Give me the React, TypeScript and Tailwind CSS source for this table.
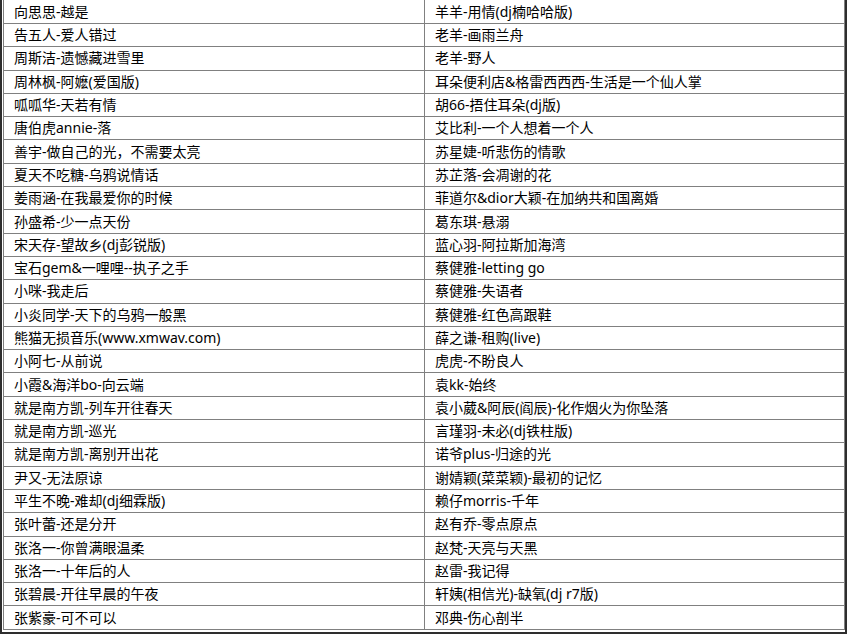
import React from "react";

const left = [
  "向思思-越是",
  "告五人-爱人错过",
  "周斯洁-遗憾藏进雪里",
  "周林枫-阿嬷(爱国版)",
  "呱呱华-天若有情",
  "唐伯虎annie-落",
  "善宇-做自己的光，不需要太亮",
  "夏天不吃糖-乌鸦说情话",
  "姜雨涵-在我最爱你的时候",
  "孙盛希-少一点天份",
  "宋天存-望故乡(dj彭锐版)",
  "宝石gem&一哩哩--执子之手",
  "小咪-我走后",
  "小炎同学-天下的乌鸦一般黑",
  "熊猫无损音乐(www.xmwav.com)",
  "小阿七-从前说",
  "小霞&海洋bo-向云端",
  "就是南方凯-列车开往春天",
  "就是南方凯-巡光",
  "就是南方凯-离别开出花",
  "尹又-无法原谅",
  "平生不晚-难却(dj细霖版)",
  "张叶蕾-还是分开",
  "张洛一-你曾满眼温柔",
  "张洛一-十年后的人",
  "张碧晨-开往早晨的午夜",
  "张紫豪-可不可以",
];

const right = [
  "羊羊-用情(dj楠哈哈版)",
  "老羊-画雨兰舟",
  "老羊-野人",
  "耳朵便利店&格雷西西西-生活是一个仙人掌",
  "胡66-捂住耳朵(dj版)",
  "艾比利-一个人想着一个人",
  "苏星婕-听悲伤的情歌",
  "苏芷落-会凋谢的花",
  "菲道尔&dior大颖-在加纳共和国离婚",
  "葛东琪-悬溺",
  "蓝心羽-阿拉斯加海湾",
  "蔡健雅-letting go",
  "蔡健雅-失语者",
  "蔡健雅-红色高跟鞋",
  "薛之谦-租购(live)",
  "虎虎-不盼良人",
  "袁kk-始终",
  "袁小葳&阿辰(阎辰)-化作烟火为你坠落",
  "言瑾羽-未必(dj铁柱版)",
  "诺爷plus-归途的光",
  "谢婧颖(菜菜颖)-最初的记忆",
  "赖仔morris-千年",
  "赵有乔-零点原点",
  "赵梵-天亮与天黑",
  "赵雷-我记得",
  "轩姨(相信光)-缺氧(dj r7版)",
  "邓典-伤心剖半",
];

export default function App() {
  return (
    <div
      className="h-[634px] w-[849px] overflow-hidden bg-white text-[14px] text-black"
      style={{ fontFamily: '"Noto Sans", "Noto Sans CJK SC", sans-serif' }}
    >
      <div className="box-border h-[634px] w-[847px] overflow-hidden border-b-2 border-l-2 border-r-2 border-[#2e2e2e] pl-px">
        <div className="border-l border-r border-[#808080]">
          {left.map((l, i) => (
            <div
              key={i}
              className={`grid grid-cols-[421px_1fr] border-b border-[#808080] ${
                i === 0 ? "h-[24px]" : "h-[23.3px]"
              }`}
            >
              <div className="flex items-center overflow-hidden whitespace-nowrap border-r border-[#808080] pl-[10px] leading-none">
                {l}
              </div>
              <div className="flex items-center overflow-hidden whitespace-nowrap pl-[10px] leading-none">
                {right[i]}
              </div>
            </div>
          ))}
        </div>
      </div>
    </div>
  );
}
